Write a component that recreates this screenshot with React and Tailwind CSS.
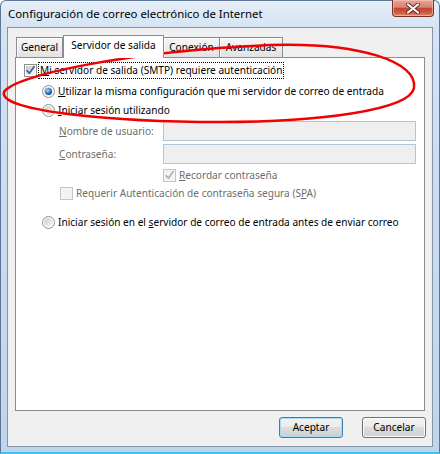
import React from "react";

function Check({ checked, disabled }) {
  return (
    <span
      className={
        disabled
          ? "flex items-center justify-center w-[13px] h-[13px] border border-[#c5c5c5] bg-[#f4f4f4] shrink-0"
          : "flex items-center justify-center w-[13px] h-[13px] border border-[#8e8f8f] bg-white shrink-0"
      }
    >
      <span
        className={
          disabled
            ? "relative w-[9px] h-[9px] bg-[#f2f2f2] flex items-center justify-center"
            : "relative w-[9px] h-[9px] bg-[linear-gradient(135deg,#c6c9cf_0%,#e4e6e8_60%,#f6f6f6_100%)] flex items-center justify-center"
        }
      >
        {checked && (
          <svg width="11" height="11" viewBox="0 0 11 11" className="absolute left-[-1px] top-[-1px]">
            <path
              d="M2 5.6 L4.4 8.2 L9.2 1.6"
              fill="none"
              stroke={disabled ? "#b0b4b8" : "#4a5f97"}
              strokeWidth="1.7"
              strokeLinecap="round"
              strokeLinejoin="round"
            />
          </svg>
        )}
      </span>
    </span>
  );
}

function Radio({ checked }) {
  return (
    <span className="w-[13px] h-[13px] rounded-full border border-[#8e8f8f] bg-white flex items-center justify-center shrink-0">
      <span className="w-[9px] h-[9px] rounded-full bg-[linear-gradient(135deg,#c9ccd1_0%,#e6e7e9_60%,#f8f8f8_100%)] flex items-center justify-center">
        {checked && (
          <span className="w-[7px] h-[7px] rounded-full bg-[radial-gradient(circle_at_40%_35%,#c3e8ff_0%,#3f8fd6_35%,#103d74_80%,#0a2548_100%)]" />
        )}
      </span>
    </span>
  );
}

function Tab({ children, selected, className }) {
  if (selected) {
    return (
      <div className="relative z-10 w-[101px] h-[23px] mb-[-1px] border border-b-0 border-[#898c95] bg-white flex justify-center pt-[3px]">
        {children}
      </div>
    );
  }
  return (
    <div
      className={
        "h-[20px] border border-b-0 border-[#898c95] bg-[linear-gradient(#f5f5f5_0%,#ededed_50%,#e2e2e2_100%)] shadow-[inset_1px_1px_0_#ffffff] flex items-center justify-center " +
        className
      }
    >
      {children}
    </div>
  );
}

export default function App() {
  return (
    <div className="relative w-[440px] h-[454px] overflow-hidden font-['Segoe_UI','Noto_Sans',sans-serif] text-black">
      <div className="w-full h-full flex flex-col rounded-t-[6px] border border-[#5d7798] border-b-2 border-b-[#3cc3f0] bg-[linear-gradient(180deg,#e6eef8_0%,#d5e3f3_6%,#cadbef_50%,#c0d4ec_100%)]">
        {/* title bar */}
        <div className="h-[26px] flex items-start justify-between pl-[7px] pr-[5px] shrink-0">
          <span className="mt-[5px] text-[11.4px] leading-[16px]">
            Configuración de correo electrónico de Internet
          </span>
          <div className="w-[42px] h-[17px] mt-[-1px] rounded-b-[4px] border border-t-0 border-[#7a3128] bg-[linear-gradient(#e5a597_0%,#d98374_45%,#c5452f_52%,#c9563f_75%,#dc8a70_100%)] shadow-[inset_0_0_0_1px_rgba(255,210,200,0.55)] flex items-center justify-center">
            <svg width="16" height="11" viewBox="0 0 16 11">
              <path d="M3 1.5 L13 9.5 M13 1.5 L3 9.5" stroke="#5a2a24" strokeWidth="4" strokeLinecap="round" />
              <path d="M3 1.5 L13 9.5 M13 1.5 L3 9.5" stroke="#ffffff" strokeWidth="2.2" strokeLinecap="round" />
            </svg>
          </div>
        </div>

        {/* client area */}
        <div className="mx-[6px] flex-1 border border-[#8593a8] bg-[#f0f0f0] flex flex-col text-[10.1px] leading-[13px]">
          <div className="pt-[7px] pl-[8px] flex items-end h-[29px]">
            <Tab className="w-[47px]">General</Tab>
            <Tab selected>Servidor de salida</Tab>
            <Tab className="w-[57px] ml-[-1px]">Conexión</Tab>
            <Tab className="w-[64px] ml-[-1px]">Avanzadas</Tab>
          </div>

          <div className="ml-[7px] w-[410px] h-[354px] border border-[#898c95] bg-white flex flex-col">
            {/* row 1 */}
            <div className="mt-[4px] h-[17px] pl-[8px] flex items-center">
              <Check checked />
              <span className="ml-[1px] h-[17px] px-[1px] border border-dotted border-black flex items-center">
                <span>
                  <u>M</u>i servidor de salida (SMTP) requiere autenticación
                </span>
              </span>
            </div>
            {/* row 2 */}
            <div className="mt-[4px] h-[17px] pl-[26px] flex items-center gap-[3px]">
              <Radio checked />
              <span>
                <u>U</u>tilizar la misma configuración que mi servidor de correo de entrada
              </span>
            </div>
            {/* row 3 */}
            <div className="mt-[2px] h-[17px] pl-[26px] flex items-center gap-[3px]">
              <Radio />
              <span>
                <u>I</u>niciar sesión utilizando
              </span>
            </div>
            {/* row 4 */}
            <div className="mt-[2px] h-[20px] pl-[43px] flex items-center text-[#6d6d6d]">
              <span className="w-[104px]">
                <u>N</u>ombre de usuario:
              </span>
              <div className="w-[253px] h-[20px] border border-[#b3c5dc] bg-[#efefef]" />
            </div>
            {/* row 5 */}
            <div className="mt-[3px] h-[20px] pl-[43px] flex items-center text-[#6d6d6d]">
              <span className="w-[104px]">
                <u>C</u>ontraseña:
              </span>
              <div className="w-[253px] h-[20px] border border-[#b3c5dc] bg-[#efefef]" />
            </div>
            {/* row 6 */}
            <div className="mt-[3px] h-[17px] pl-[147px] flex items-center gap-[3px] text-[#6d6d6d]">
              <Check checked disabled />
              <span>
                <u>R</u>ecordar contraseña
              </span>
            </div>
            {/* row 7 */}
            <div className="mt-[1px] h-[17px] pl-[44px] flex items-center gap-[3px] text-[#6d6d6d]">
              <Check disabled />
              <span>
                Requerir Autenticación de contraseña segura (S<u>P</u>A)
              </span>
            </div>
            {/* row 8 */}
            <div className="mt-[12px] h-[17px] pl-[26px] flex items-center gap-[3px]">
              <Radio />
              <span>
                Iniciar sesión en el <u>s</u>ervidor de correo de entrada antes de enviar correo
              </span>
            </div>
          </div>

          <div className="mt-[6px] h-[21px] flex justify-end gap-[19px] pr-[6px]">
            <button className="w-[64px] h-[21px] rounded-[3px] border border-[#3c7fb1] bg-[linear-gradient(#f2f2f2_0%,#ebebeb_50%,#dddddd_50%,#cfcfcf_100%)] shadow-[inset_0_0_0_1px_#a6dcf6] flex items-center justify-center">
              Aceptar
            </button>
            <button className="w-[64px] h-[21px] rounded-[3px] border border-[#707070] bg-[linear-gradient(#f2f2f2_0%,#ebebeb_50%,#dddddd_50%,#cfcfcf_100%)] shadow-[inset_0_0_0_1px_#fcfcfc] flex items-center justify-center">
              Cancelar
            </button>
          </div>
        </div>
        <div className="h-[5px] shrink-0" />
      </div>

      {/* red annotation ellipse */}
      <svg className="absolute left-0 top-0 pointer-events-none" width="440" height="454" viewBox="0 0 440 454">
        <path
          d="M4 92 C14 76 120 52 270 45 C360 42 418 62 414 88 C410 110 320 122 220 122 C120 122 -2 112 4 92 Z"
          fill="none"
          stroke="#f00000"
          strokeWidth="2.5"
        />
      </svg>
    </div>
  );
}
